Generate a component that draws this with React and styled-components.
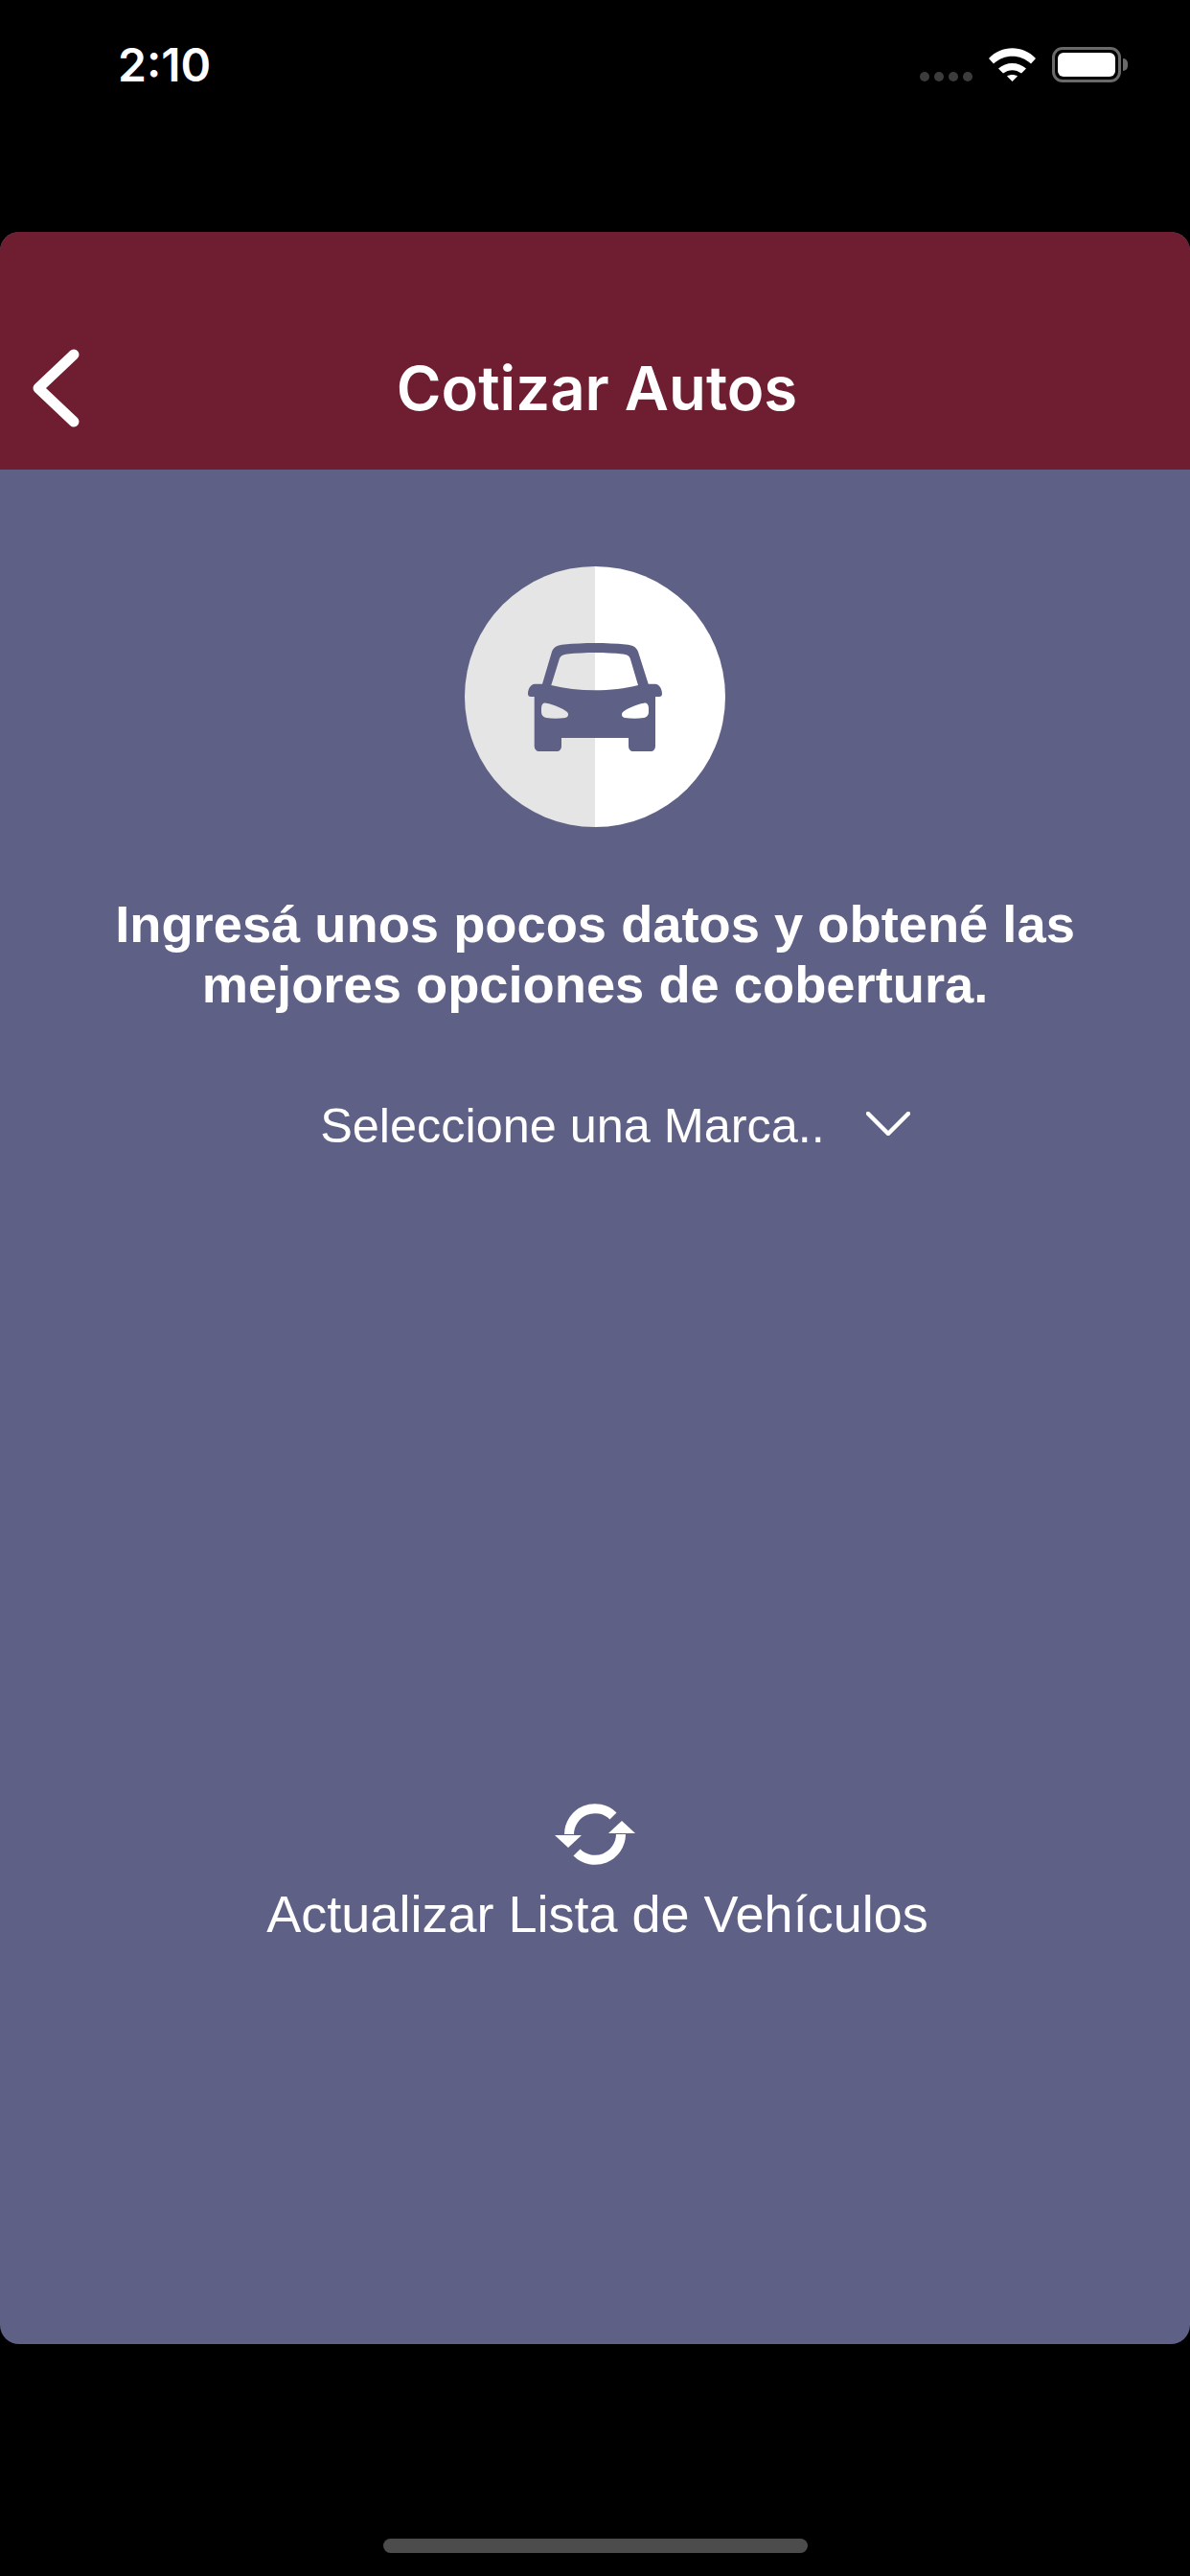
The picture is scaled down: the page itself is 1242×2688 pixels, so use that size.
import styled, { createGlobalStyle } from 'styled-components';

const GlobalStyle = createGlobalStyle`
  html, body {
    margin: 0;
    padding: 0;
    background: #000;
  }
`;

export default function App() {
  return (
    <Screen>
      <GlobalStyle />
      <StatusBar>
        <Time>2:10</Time>
        <StatusIcons>
          <SignalDots>
            <SignalDot />
            <SignalDot />
            <SignalDot />
            <SignalDot />
          </SignalDots>
          <WifiIcon viewBox="0 0 49 35">
            <path d="M0 11C13-3.5 36-3.5 49 11L44 16.5C33 6 16 6 5 16.5Z" />
            <path d="M10 21.5C18 14 31 14 39 21.5L34 26.5C28 22 21 22 15 26.5Z" />
            <path d="M19 29.5C22 27.5 27 27.5 30 29.5L24.5 35Z" />
          </WifiIcon>
          <Battery>
            <BatteryLevel />
          </Battery>
        </StatusIcons>
      </StatusBar>
      <Card>
        <Header>
          <BackIcon viewBox="0 0 54 88">
            <path d="M45 9L8 44L45 79" />
          </BackIcon>
          <Title>Cotizar Autos</Title>
        </Header>
        <Body>
          <CarBadge>
            <CarIcon viewBox="0 0 140 113">
              <path
                fillRule="evenodd"
                d="M25 9C27 4 31 2 38 1.5C58-.5 82-.5 102 1.5C109 2 113 4 115 9L125.700 42.700H133C137 42.700 140 48 140 53C140 55 139 56 137 56H133V107C133 111 131 113 128 113H110C107 113 105 111 105 107V99H35V107C35 111 33 113 30 113H12C9 113 6.700 111 6.700 107V56H3C1 56 0 55 0 53C0 48 3 42.700 7 42.700H15ZM33 16L24.300 44C52 51 88 51 115 44L106.700 16C105.500 13 103 12 99 11.500C80 9.500 60 9.500 41 11.500C37 12 34.500 13 33 16ZM14 68C14 64 16 62 19 62.700C27 64 36 68 41 72C43 74 42 77.500 39 78C32 79 25 79 19 78C16 77.500 14 75 14 72ZM126 68C126 64 124 62 121 62.700C113 64 104 68 99 72C97 74 98 77.500 101 78C108 79 115 79 121 78C124 77.500 126 75 126 72Z"
              />
            </CarIcon>
          </CarBadge>
          <Heading>
            Ingresá unos pocos datos y obtené las
            <br />
            mejores opciones de cobertura.
          </Heading>
          <BrandSelect>
            <SelectLabel>Seleccione una Marca..</SelectLabel>
            <SelectChevron viewBox="0 0 46 25">
              <path d="M2 2L23 23L44 2" />
            </SelectChevron>
          </BrandSelect>
          <RefreshAction>
            <RefreshIcon viewBox="0 0 84 66">
              <path className="arc" d="M61 14A27 27 0 0 0 15 33" />
              <path className="arc" d="M23 52A27 27 0 0 0 69 33" />
              <path className="head" d="M0 34H28L14 47Z" />
              <path className="head" d="M56 32H84L70 19Z" />
            </RefreshIcon>
            <RefreshLabel>Actualizar Lista de Vehículos</RefreshLabel>
          </RefreshAction>
        </Body>
      </Card>
      <HomeZone>
        <HomeIndicator />
      </HomeZone>
    </Screen>
  );
}

const Screen = styled.div`
  width: 1242px;
  height: 2688px;
  background: #000;
  display: flex;
  flex-direction: column;
  overflow: hidden;
`;

const StatusBar = styled.div`
  height: 242px;
  box-sizing: border-box;
  padding: 49px 72px 0 123px;
  display: flex;
  justify-content: space-between;
  align-items: flex-start;
`;

const Time = styled.div`
  font-family: Inter, 'Liberation Sans', sans-serif;
  font-size: 48px;
  font-weight: 600;
  line-height: 37px;
  color: #fff;
`;

const StatusIcons = styled.div`
  display: flex;
  align-items: flex-end;
`;

const SignalDots = styled.div`
  display: flex;
  gap: 5px;
  margin: 0 17px 1px 0;
`;

const SignalDot = styled.div`
  width: 10px;
  height: 10px;
  border-radius: 50%;
  background: #3c3c3c;
`;

const WifiIcon = styled.svg`
  width: 49px;
  height: 35px;
  margin: 0 17px 1px 0;
  fill: #fff;
`;

const Battery = styled.div`
  position: relative;
  width: 72px;
  height: 37px;
  box-sizing: border-box;
  border: 3px solid #6a6a6a;
  border-radius: 11px;
  padding: 3px;

  &::after {
    content: '';
    position: absolute;
    left: 71px;
    top: 9px;
    width: 5px;
    height: 13px;
    border-radius: 0 6px 6px 0;
    background: #6a6a6a;
  }
`;

const BatteryLevel = styled.div`
  width: 100%;
  height: 100%;
  border-radius: 6px;
  background: #fff;
`;

const Card = styled.div`
  height: 2204px;
  border-radius: 20px;
  overflow: hidden;
  display: flex;
  flex-direction: column;
  background: #5f6085;
`;

const Header = styled.div`
  height: 248px;
  box-sizing: border-box;
  padding: 119px 0 0 32px;
  position: relative;
  background: #6f1d30;
`;

const BackIcon = styled.svg`
  display: block;
  width: 54px;
  height: 88px;
  fill: none;
  stroke: #fff;
  stroke-width: 11;
  stroke-linecap: round;
  stroke-linejoin: round;
`;

const Title = styled.div`
  position: absolute;
  left: 4px;
  right: 0;
  top: 123px;
  text-align: center;
  font-family: Inter, 'Liberation Sans', sans-serif;
  font-size: 63.500px;
  font-weight: 600;
  line-height: 80px;
  color: #fff;
`;

const Body = styled.div`
  flex: 1;
  padding-top: 101px;
  display: flex;
  flex-direction: column;
  align-items: center;
`;

const CarBadge = styled.div`
  width: 272px;
  height: 272px;
  border-radius: 50%;
  background: linear-gradient(to right, #e5e5e5 50%, #fff 50%);
  display: flex;
  align-items: center;
  justify-content: center;
`;

const CarIcon = styled.svg`
  width: 140px;
  height: 113px;
  margin-top: 1px;
  fill: #5f6085;
`;

const Heading = styled.h1`
  margin: 70px 0 0;
  text-align: center;
  font-family: 'Liberation Sans', Arial, sans-serif;
  font-size: 54.300px;
  font-weight: 700;
  line-height: 63px;
  color: #fff;
  white-space: nowrap;
`;

const BrandSelect = styled.div`
  margin: 84px 0 0 42px;
  display: flex;
  align-items: center;
  gap: 43px;
`;

const SelectLabel = styled.span`
  font-family: 'Liberation Sans', Arial, sans-serif;
  font-size: 50.400px;
  line-height: 63px;
  color: #fff;
`;

const SelectChevron = styled.svg`
  width: 46px;
  height: 25px;
  margin-bottom: 4px;
  fill: none;
  stroke: #fff;
  stroke-width: 4.500;
  stroke-linecap: round;
  stroke-linejoin: round;
`;

const RefreshAction = styled.div`
  margin-top: 675px;
  display: flex;
  flex-direction: column;
  align-items: center;
`;

const RefreshIcon = styled.svg`
  width: 84px;
  height: 66px;

  .arc {
    fill: none;
    stroke: #fff;
    stroke-width: 10;
  }

  .head {
    fill: #fff;
  }
`;

const RefreshLabel = styled.div`
  margin: 19px 0 0 5px;
  font-family: 'Liberation Sans', Arial, sans-serif;
  font-size: 54px;
  line-height: 63px;
  color: #fff;
`;

const HomeZone = styled.div`
  flex: 1;
  display: flex;
  justify-content: center;
  padding-top: 203px;
`;

const HomeIndicator = styled.div`
  width: 443px;
  height: 15px;
  border-radius: 8px;
  background: #4c4c4c;
`;
